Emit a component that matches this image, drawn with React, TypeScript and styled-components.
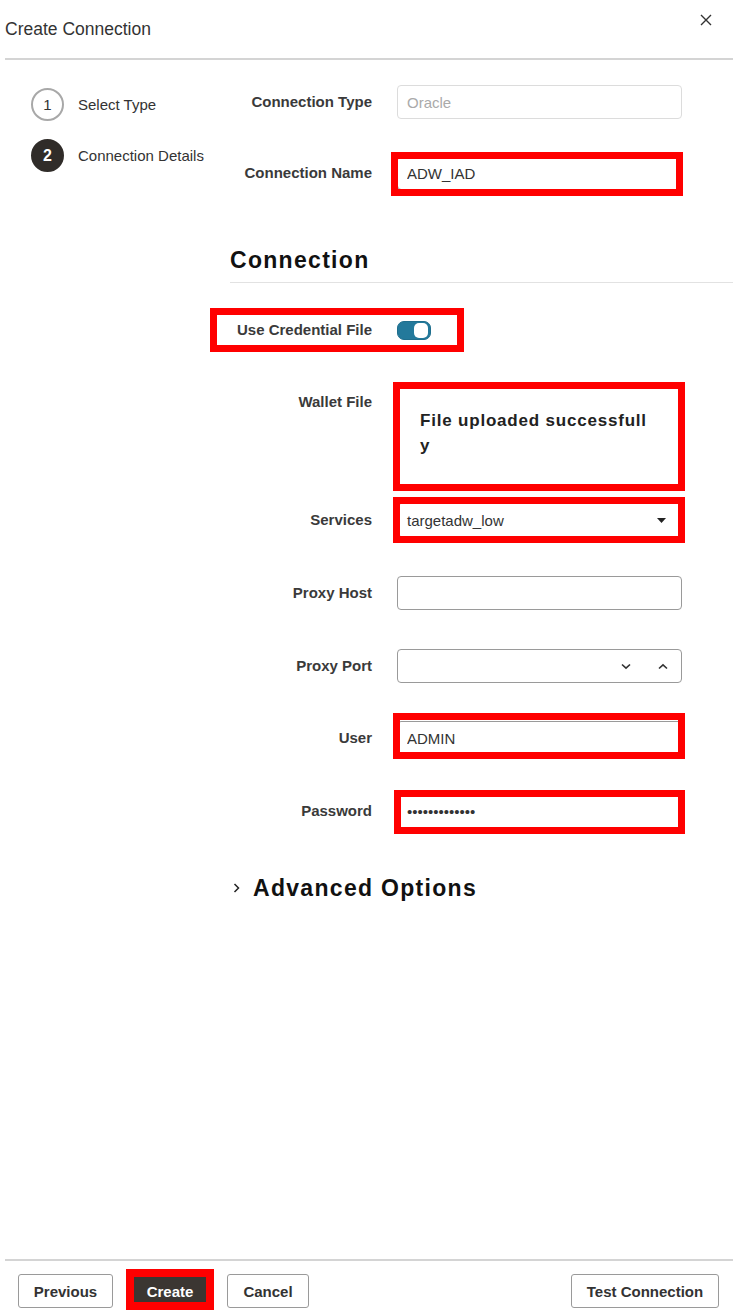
import React from "react";
import styled, { createGlobalStyle } from "styled-components";

const GlobalStyle = createGlobalStyle`
  html, body { margin: 0; padding: 0; background: #fff; }
  body { font-family: "Liberation Sans", Arial, sans-serif; color: #333; }
  * { box-sizing: border-box; }
`;

const Page = styled.div`
  width: 738px;
  min-height: 1314px;
  padding: 0 5px;
  display: flex;
  flex-direction: column;
`;

const Header = styled.header`
  height: 60px;
  border-bottom: 2px solid #d4d4d4;
  display: flex;
  justify-content: space-between;
  align-items: flex-start;
`;

const Title = styled.h1`
  margin: 0;
  padding-top: 19px;
  font-size: 17.5px;
  line-height: 20px;
  font-weight: 400;
  color: #333;
`;

const CloseButton = styled.button`
  border: 0;
  background: none;
  padding: 0;
  margin: 14px 21px 0 0;
  width: 12px;
  height: 12px;
  display: flex;
  cursor: pointer;
`;

const Main = styled.main`
  flex: 1;
  display: grid;
  grid-template-columns: 225px 1fr;
`;

const Stepper = styled.ol`
  list-style: none;
  margin: 0;
  padding: 28px 0 0 26px;
  display: flex;
  flex-direction: column;
  gap: 18px;
`;

const Step = styled.li`
  display: flex;
  align-items: center;
  gap: 14px;
  font-size: 15px;
  line-height: 18px;
  color: #333;
`;

const StepCircle = styled.span<{ $active?: boolean }>`
  width: 33px;
  height: 33px;
  border-radius: 50%;
  display: flex;
  align-items: center;
  justify-content: center;
  border: 2px solid ${(p) => (p.$active ? "#302c29" : "#a8a8a8")};
  background: ${(p) => (p.$active ? "#302c29" : "#fff")};
  color: ${(p) => (p.$active ? "#fff" : "#333")};
  font-weight: ${(p) => (p.$active ? 700 : 400)};
  font-size: ${(p) => (p.$active ? 16 : 15)}px;
`;

const Form = styled.section`
  padding-top: 25px;
  display: flex;
  flex-direction: column;
`;

const Row = styled.div<{ $mt: number }>`
  display: grid;
  grid-template-columns: 142px 285px;
  column-gap: 25px;
  align-items: center;
  margin-top: ${(p) => p.$mt}px;
`;

const Label = styled.label<{ $top?: boolean }>`
  text-align: right;
  font-size: 15px;
  font-weight: 700;
  line-height: 18px;
  color: #3a3a3a;
  align-self: ${(p) => (p.$top ? "start" : "center")};
  padding-top: ${(p) => (p.$top ? 7 : 0)}px;
`;

const Field = styled.div`
  position: relative;
  width: 285px;
`;

const TextInput = styled.input<{ $muted?: boolean }>`
  display: block;
  width: 285px;
  height: 34px;
  border: 1px solid ${(p) => (p.$muted ? "#dcdcdc" : "#9a9a9a")};
  border-radius: 4px;
  padding: 0 9px;
  font: 15px "Liberation Sans", Arial, sans-serif;
  color: ${(p) => (p.$muted ? "#aaa" : "#333")};
  background: #fff;
  outline: none;
`;

const Highlight = styled.span<{ $t: number; $r: number; $b: number; $l: number; $w?: number }>`
  position: absolute;
  top: ${(p) => p.$t}px;
  right: ${(p) => p.$r}px;
  bottom: ${(p) => p.$b}px;
  left: ${(p) => p.$l}px;
  border: ${(p) => p.$w ?? 7}px solid #ff0000;
  pointer-events: none;
`;

const SectionHeading = styled.h2`
  margin: 57px 0 0;
  padding-bottom: 9px;
  border-bottom: 1px solid #e2e2e2;
  font-size: 23px;
  line-height: 26px;
  font-weight: 700;
  letter-spacing: 1.3px;
  color: #111;
`;

const ToggleGroup = styled.div`
  position: relative;
  align-self: flex-start;
  display: grid;
  grid-template-columns: 142px auto;
  column-gap: 25px;
  align-items: center;
  height: 34px;
  margin-top: 30px;
`;

const Switch = styled.button`
  width: 34px;
  height: 19px;
  border-radius: 7px;
  background: #23799b;
  border: 1px solid #1f6e8d;
  padding: 0 2px 0 0;
  display: flex;
  align-items: center;
  justify-content: flex-end;
`;

const Knob = styled.span`
  width: 14px;
  height: 15px;
  border-radius: 5px;
  background: #fff;
`;

const Dropzone = styled.div`
  width: 285px;
  height: 102px;
  border: 1px dashed #9a9a9a;
  border-radius: 4px;
  padding: 21px 0 0 22px;
`;

const UploadText = styled.p`
  margin: 0;
  width: 234px;
  font-size: 17px;
  line-height: 25px;
  font-weight: 700;
  letter-spacing: 0.8px;
  color: #222;
  word-break: break-all;
`;

const SelectBox = styled.div`
  width: 285px;
  height: 34px;
  border: 1px solid #9a9a9a;
  border-radius: 4px;
  display: flex;
  align-items: center;
  justify-content: space-between;
  padding: 0 15px 0 9px;
  font-size: 15px;
  color: #333;
`;

const SpinBox = styled.div`
  width: 285px;
  height: 34px;
  border: 1px solid #9a9a9a;
  border-radius: 4px;
  display: flex;
  align-items: center;
  justify-content: flex-end;
  gap: 27px;
  padding-right: 13px;
`;

const SpinButton = styled.button`
  border: 0;
  background: none;
  padding: 0;
  width: 10px;
  height: 7px;
  display: flex;
`;

const AdvancedToggle = styled.button`
  align-self: flex-start;
  margin-top: 47px;
  display: flex;
  align-items: center;
  gap: 13px;
  padding: 0 0 0 3px;
  border: 0;
  background: none;
  font: 700 23px/26px "Liberation Sans", Arial, sans-serif;
  letter-spacing: 1.3px;
  color: #111;
`;

const Footer = styled.footer`
  border-top: 2px solid #d4d4d4;
  display: flex;
  align-items: center;
  gap: 17px;
  padding: 13px 14px 6px 13px;
`;

const ButtonWrap = styled.div`
  position: relative;
  display: flex;
`;

const FooterButton = styled.button<{ $primary?: boolean; $w: number; $push?: boolean }>`
  width: ${(p) => p.$w}px;
  height: 34px;
  margin-left: ${(p) => (p.$push ? "auto" : "0")};
  border: 1px solid ${(p) => (p.$primary ? "#3b3632" : "#9a9a9a")};
  border-radius: 3px;
  background: ${(p) => (p.$primary ? "#3b3632" : "#fff")};
  color: ${(p) => (p.$primary ? "#fff" : "#333")};
  font: 700 15px "Liberation Sans", Arial, sans-serif;
  padding: 0;
`;

const CloseIcon = () => (
  <svg width="12" height="12" viewBox="0 0 12 12">
    <path d="M1 1L11 11M11 1L1 11" stroke="#333" strokeWidth="1.4" />
  </svg>
);

const Caret = () => (
  <svg width="9" height="5" viewBox="0 0 9 5">
    <path d="M0 0H9L4.5 5Z" fill="#222" />
  </svg>
);

const ChevronDown = () => (
  <svg width="10" height="7" viewBox="0 0 10 7">
    <path d="M1 1.5L5 5.2L9 1.5" stroke="#333" strokeWidth="1.6" fill="none" />
  </svg>
);

const ChevronUp = () => (
  <svg width="10" height="7" viewBox="0 0 10 7">
    <path d="M1 5.5L5 1.8L9 5.5" stroke="#333" strokeWidth="1.6" fill="none" />
  </svg>
);

const ChevronRight = () => (
  <svg width="7" height="10" viewBox="0 0 7 10">
    <path d="M1.5 1L5.5 5L1.5 9" stroke="#222" strokeWidth="1.5" fill="none" />
  </svg>
);

export default function App() {
  return (
    <>
      <GlobalStyle />
      <Page>
        <Header>
          <Title>Create Connection</Title>
          <CloseButton aria-label="Close">
            <CloseIcon />
          </CloseButton>
        </Header>
        <Main>
          <Stepper>
            <Step>
              <StepCircle>1</StepCircle>
              Select Type
            </Step>
            <Step>
              <StepCircle $active>2</StepCircle>
              Connection Details
            </Step>
          </Stepper>
          <Form>
            <Row $mt={0}>
              <Label>Connection Type</Label>
              <Field>
                <TextInput $muted readOnly value="Oracle" />
              </Field>
            </Row>
            <Row $mt={37}>
              <Label>Connection Name</Label>
              <Field>
                <TextInput readOnly value="ADW_IAD" />
                <Highlight $t={-4} $r={-1} $b={-6} $l={-6} />
              </Field>
            </Row>

            <SectionHeading>Connection</SectionHeading>

            <ToggleGroup>
              <Label>Use Credential File</Label>
              <Switch aria-label="Use Credential File">
                <Knob />
              </Switch>
              <Highlight $t={-5} $r={-33} $b={-5} $l={-20} />
            </ToggleGroup>

            <Row $mt={39}>
              <Label $top>Wallet File</Label>
              <Field>
                <Dropzone>
                  <UploadText>File uploaded successfully</UploadText>
                </Dropzone>
                <Highlight $t={-4} $r={-3} $b={-3} $l={-4} />
              </Field>
            </Row>
            <Row $mt={15}>
              <Label>Services</Label>
              <Field>
                <SelectBox>
                  <span>targetadw_low</span>
                  <Caret />
                </SelectBox>
                <Highlight $t={-6} $r={-3} $b={-6} $l={-4} />
              </Field>
            </Row>
            <Row $mt={39}>
              <Label>Proxy Host</Label>
              <Field>
                <TextInput readOnly value="" />
              </Field>
            </Row>
            <Row $mt={39}>
              <Label>Proxy Port</Label>
              <Field>
                <SpinBox>
                  <SpinButton aria-label="Decrease">
                    <ChevronDown />
                  </SpinButton>
                  <SpinButton aria-label="Increase">
                    <ChevronUp />
                  </SpinButton>
                </SpinBox>
              </Field>
            </Row>
            <Row $mt={38}>
              <Label>User</Label>
              <Field>
                <TextInput readOnly value="ADMIN" />
                <Highlight $t={-8} $r={-3} $b={-4} $l={-4} />
              </Field>
            </Row>
            <Row $mt={39}>
              <Label>Password</Label>
              <Field>
                <TextInput type="password" readOnly value="xxxxxxxxxxxxx" />
                <Highlight $t={-4} $r={-3} $b={-6} $l={-3} />
              </Field>
            </Row>

            <AdvancedToggle>
              <ChevronRight />
              Advanced Options
            </AdvancedToggle>
          </Form>
        </Main>
        <Footer>
          <FooterButton $w={95}>Previous</FooterButton>
          <ButtonWrap>
            <FooterButton $primary $w={80}>Create</FooterButton>
            <Highlight $t={-5} $r={-4} $b={-2} $l={-4} $w={8} />
          </ButtonWrap>
          <FooterButton $w={82}>Cancel</FooterButton>
          <FooterButton $w={148} $push>Test Connection</FooterButton>
        </Footer>
      </Page>
    </>
  );
}
